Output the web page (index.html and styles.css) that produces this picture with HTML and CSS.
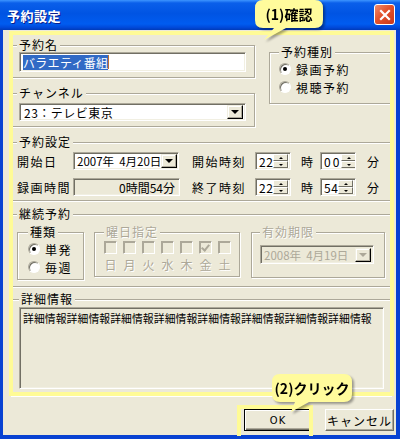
FILE: index.html
```html
<!DOCTYPE html>
<html lang="ja">
<head>
    <meta charset="UTF-8">
    <title>予約設定</title>
    <link rel="stylesheet" href="styles.css">
</head>
<body>
    <div class="window">
        <div class="titlebar">
            <span class="title">予約設定</span>
            <span class="close-btn">
                <svg width="12" height="12" viewBox="0 0 12 12"><path d="M2 2 L10 10 M10 2 L2 10" stroke="#fff" stroke-width="2.2" stroke-linecap="square"/></svg>
            </span>
        </div>

        <div class="client">
            <div class="top-row">
                <div class="left-col">
                    <fieldset class="group g-name">
                        <legend>予約名</legend>
                        <div class="field text-input"><span class="selected">バラエティ番組</span><span class="caret"></span></div>
                    </fieldset>
                    <fieldset class="group g-channel">
                        <legend>チャンネル</legend>
                        <div class="field combo"><span class="value">23：テレビ東京</span><span class="drop"><i class="arrow"></i></span></div>
                    </fieldset>
                </div>
                <fieldset class="group g-kind">
                    <legend>予約種別</legend>
                    <div class="radio"><span class="dot on"></span>録画予約</div>
                    <div class="radio"><span class="dot"></span>視聴予約</div>
                </fieldset>
            </div>

            <fieldset class="group g-time">
                <legend>予約設定</legend>
                <div class="time-grid">
                    <span class="lbl">開始日</span>
                    <div class="field combo date"><span class="value">2007年&nbsp;&nbsp;4月20日</span><span class="drop"><i class="arrow"></i></span></div>
                    <span></span>
                    <span class="lbl">開始時刻</span>
                    <div class="field spin"><span class="value">22</span><span class="spin-btns"><b><i class="up"></i></b><b><i class="down"></i></b></span></div>
                    <span class="unit">時</span>
                    <div class="field spin"><span class="value wide">00</span><span class="spin-btns"><b><i class="up"></i></b><b><i class="down"></i></b></span></div>
                    <span class="unit">分</span>

                    <span class="lbl">録画時間</span>
                    <div class="field readonly">0時間54分</div>
                    <span></span>
                    <span class="lbl">終了時刻</span>
                    <div class="field spin"><span class="value">22</span><span class="spin-btns"><b><i class="up"></i></b><b><i class="down"></i></b></span></div>
                    <span class="unit">時</span>
                    <div class="field spin"><span class="value">54</span><span class="spin-btns"><b><i class="up"></i></b><b><i class="down"></i></b></span></div>
                    <span class="unit">分</span>
                </div>
            </fieldset>

            <fieldset class="group g-repeat">
                <legend>継続予約</legend>
                <div class="repeat-row">
                    <fieldset class="group g-type">
                        <legend>種類</legend>
                        <div class="radio"><span class="dot on"></span>単発</div>
                        <div class="radio"><span class="dot"></span>毎週</div>
                    </fieldset>
                    <fieldset class="group g-days disabled">
                        <legend>曜日指定</legend>
                        <div class="days">
                            <div class="day"><span class="check"></span>日</div>
                            <div class="day"><span class="check"></span>月</div>
                            <div class="day"><span class="check"></span>火</div>
                            <div class="day"><span class="check"></span>水</div>
                            <div class="day"><span class="check"></span>木</div>
                            <div class="day"><span class="check checked"></span>金</div>
                            <div class="day"><span class="check"></span>土</div>
                        </div>
                    </fieldset>
                    <fieldset class="group g-limit disabled">
                        <legend>有効期限</legend>
                        <div class="field combo date off"><span class="value">2008年&nbsp;&nbsp;4月19日</span><span class="drop"><i class="arrow"></i></span></div>
                    </fieldset>
                </div>
            </fieldset>

            <fieldset class="group g-detail">
                <legend>詳細情報</legend>
                <div class="field memo">詳細情報詳細情報詳細情報詳細情報詳細情報詳細情報詳細情報詳細情報</div>
            </fieldset>

            <div class="buttons">
                <button class="btn default">OK</button>
                <button class="btn">キャンセル</button>
            </div>
        </div>

        <!-- annotation overlays -->
        <div class="mark mark-form"></div>
        <div class="mark mark-ok"></div>
        <svg class="callout callout-1" width="82" height="46" viewBox="0 0 82 46">
            <path d="M13 2 H65 Q73 2 73 10 V22 Q73 30 65 30 H36 L14 42 L24 30 H13 Q5 30 5 22 V10 Q5 2 13 2 Z" fill="#fffb9c"/>
            <text x="39" y="22" text-anchor="middle">(1)確認</text>
        </svg>
        <svg class="callout callout-2" width="92" height="46" viewBox="0 0 92 46">
            <path d="M13 2 H77 Q85 2 85 10 V22 Q85 30 77 30 H42 L24 40 L28 30 H13 Q5 30 5 22 V10 Q5 2 13 2 Z" fill="#fffb9c"/>
            <text x="45" y="22" text-anchor="middle">(2)クリック</text>
        </svg>
    </div>
</body>
</html>
```

FILE: styles.css
```css
body {
    margin: 0;
    font-family: "Noto Sans CJK JP", "Liberation Sans", sans-serif;
    font-size: 12px;
    color: #000;
}
.window {
    position: relative;
    width: 400px;
    height: 439px;
    display: flex;
    flex-direction: column;
    overflow: hidden;
    background: #0842d2;
}
.titlebar {
    height: 30px;
    display: flex;
    align-items: center;
    justify-content: space-between;
    padding: 0 5px 0 7px;
    background: linear-gradient(to bottom, #3d95ff 0%, #0a5fea 10%, #0054e3 45%, #005cf0 80%, #0048d8 92%, #003bb8 100%);
}
.title {
    color: #fff;
    font-size: 13px;
    font-weight: bold;
    letter-spacing: 0.5px;
    text-shadow: 1px 1px 0 #0a1e8c;
}
.close-btn {
    width: 19px;
    height: 19px;
    margin-top: -1px;
    border: 1px solid #fff;
    border-radius: 3px;
    background: linear-gradient(135deg, #f08c6c 0%, #e3522c 45%, #c8381a 100%);
    display: flex;
    align-items: center;
    justify-content: center;
}

.client {
    flex: 1;
    background: #ece9d8;
    margin: 0 4px 4px 3px;
    padding: 8px 5px 0 7px;
    display: flex;
    flex-direction: column;
}

/* group boxes */
.group {
    margin: 0;
    padding: 0 5px 5px 6px;
    min-width: 0;
    border: 1px solid #aca899;
    box-shadow: inset 1px 1px 0 #fff, 1px 1px 0 #fff;
}
.group legend {
    padding: 0 2px;
    line-height: 14px;
    letter-spacing: 1px;
    background: #ece9d8;
}
.disabled legend,
.disabled .day {
    color: #aca899;
    text-shadow: 1px 1px 0 #fff;
}

.top-row {
    display: flex;
    align-items: flex-start;
    gap: 14px;
}
.left-col {
    width: 245px;
    display: flex;
    flex-direction: column;
    gap: 8px;
}
.g-channel .field {
    margin-top: 3px;
}
.g-kind {
    flex: 1;
    margin-top: 7px;
    padding: 1px 0 7px 9px;
}

/* fields */
.field {
    box-sizing: border-box;
    border: 1px solid;
    border-color: #aca899 #fff #fff #aca899;
    box-shadow: inset 1px 1px 0 #716f64, inset -1px -1px 0 #f1efe2;
    background: #fff;
    display: flex;
    align-items: center;
    white-space: nowrap;
    overflow: hidden;
}
.text-input {
    height: 20px;
    margin-left: 2px;
    width: 227px;
    padding: 0 3px;
}
.selected {
    background: #316ac5;
    color: #fff;
    line-height: 15px;
    letter-spacing: 0.3px;
}
.caret {
    width: 1px;
    height: 14px;
    background: #c07030;
}
.combo {
    height: 18px;
    width: 227px;
    margin-left: 2px;
    padding: 2px;
    justify-content: space-between;
}
.combo .value {
    padding-left: 2px;
    letter-spacing: 0.5px;
}
.drop {
    flex: none;
    width: 16px;
    height: 14px;
    box-sizing: border-box;
    background: #ece9d8;
    border: 1px solid;
    border-color: #f1efe2 #000 #000 #f1efe2;
    box-shadow: inset -1px -1px 0 #aca899, inset 1px 1px 0 #fff;
    display: flex;
    align-items: center;
    justify-content: center;
}
.arrow {
    border-left: 4px solid transparent;
    border-right: 4px solid transparent;
    border-top: 4px solid #000;
}
.off {
    background: #ece9d8;
    color: #aca899;
}
.off .arrow {
    border-top-color: #aca899;
}

/* radios */
.radio {
    height: 18px;
    display: flex;
    align-items: center;
    letter-spacing: 1.5px;
}
.dot {
    width: 12px;
    height: 12px;
    box-sizing: border-box;
    margin-right: 5px;
    border-radius: 50%;
    border: 1px solid;
    border-color: #aca899 #fff #fff #aca899;
    background: #fff;
    box-shadow: inset 1px 1px 0 #716f64;
    display: flex;
    align-items: center;
    justify-content: center;
}
.dot.on::after {
    content: "";
    width: 4px;
    height: 4px;
    border-radius: 50%;
    background: #000;
}

/* reservation time */
.g-time {
    margin-top: 8px;
    padding-top: 3px;
    padding-bottom: 4px;
}
.time-grid {
    display: grid;
    grid-template-columns: 56px 105px 14px 63px 36px 29px 37px auto;
    grid-template-rows: 18px 18px;
    row-gap: 8px;
    align-items: center;
}
.lbl {
    letter-spacing: 1.5px;
}
.date {
    width: 106px;
    margin-left: 0;
    height: 18px;
}
.date .value {
    font-size: 11.5px;
    letter-spacing: 0;
    padding-left: 1px;
}
.spin {
    height: 18px;
    width: 36px;
    padding: 2px 2px 2px 3px;
    justify-content: space-between;
}
.spin .value {
    letter-spacing: 0.5px;
}
.spin .value.wide {
    letter-spacing: 2px;
}
.spin-btns {
    flex: none;
    display: flex;
    flex-direction: column;
    width: 15px;
}
.spin-btns b {
    height: 7px;
    box-sizing: border-box;
    background: #ece9d8;
    border: 1px solid;
    border-color: #fff #716f64 #716f64 #fff;
    display: flex;
    align-items: center;
    justify-content: center;
}
.up {
    border-left: 2px solid transparent;
    border-right: 2px solid transparent;
    border-bottom: 2px solid #000;
}
.down {
    border-left: 2px solid transparent;
    border-right: 2px solid transparent;
    border-top: 2px solid #000;
}
.unit {
    padding-left: 10px;
}
.readonly {
    height: 18px;
    width: 107px;
    background: #ece9d8;
    justify-content: flex-end;
    padding-right: 4px;
}

/* repeat */
.g-repeat {
    margin-top: 6px;
    padding-top: 4px;
    padding-bottom: 6px;
}
.repeat-row {
    display: flex;
    align-items: flex-start;
}
.g-type {
    width: 67px;
    box-sizing: border-box;
    padding: 1px 0 3px 10px;
}
.g-days {
    margin-left: 10px;
    width: 146px;
    box-sizing: border-box;
    padding: 2px 0 3px 9px;
}
.days {
    display: flex;
    gap: 6px;
}
.day {
    width: 13px;
    display: flex;
    flex-direction: column;
    align-items: center;
    gap: 3px;
    line-height: 16px;
}
.check {
    width: 13px;
    height: 13px;
    box-sizing: border-box;
    border: 1px solid;
    border-color: #aca899 #fff #fff #aca899;
    box-shadow: inset 1px 1px 0 #aca899;
    position: relative;
}
.check.checked::after {
    content: "";
    position: absolute;
    left: 3px;
    top: 1px;
    width: 3px;
    height: 6px;
    border: solid #aca899;
    border-width: 0 2px 2px 0;
    transform: rotate(40deg);
}
.g-limit {
    margin-left: 11px;
    flex: 1;
    padding: 6px 6px 13px 8px;
}
.g-limit .date {
    width: 114px;
    height: 19px;
}

/* detail */
.g-detail {
    margin-top: 5px;
    padding: 1px 6px 6px 8px;
}
.memo {
    height: 82px;
    background: #ece9d8;
    align-items: flex-start;
    padding: 3px 3px;
    font-size: 10.8px;
    line-height: 14px;
    letter-spacing: 0.1px;
}

/* buttons */
.buttons {
    display: flex;
    justify-content: flex-end;
    gap: 13px;
    margin-top: 13px;
    margin-right: -3px;
}
.btn {
    width: 69px;
    height: 22px;
    padding: 0;
    font-family: "Noto Sans CJK JP", "Liberation Sans", sans-serif;
    font-size: 12px;
    letter-spacing: 1px;
    background: #ece9d8;
    border: 1px solid;
    border-color: #fff #716f64 #716f64 #fff;
    box-shadow: inset -1px -1px 0 #aca899;
}
.btn.default {
    width: 68px;
    border-color: #000;
    box-shadow: inset 1px 1px 0 #fff, inset -1px -1px 0 #716f64, inset -2px -2px 0 #aca899;
    font-family: "Liberation Sans Narrow", "DejaVu Sans Condensed", sans-serif;
    font-size: 11px;
}

/* annotations */
.mark {
    position: absolute;
    box-sizing: border-box;
    border: 4px solid #fffb96;
    pointer-events: none;
}
.mark-form {
    left: 9px;
    top: 31px;
    width: 385px;
    height: 365px;
}
.mark-ok {
    left: 237px;
    top: 405px;
    width: 76px;
    height: 31px;
    border-bottom: none;
}
.callout {
    position: absolute;
    filter: drop-shadow(2px 2px 1px rgba(0, 0, 0, 0.35));
}
.callout text {
    font-family: "Noto Sans CJK JP", sans-serif;
    font-size: 14px;
    font-weight: bold;
    fill: #000;
}
.callout-1 {
    left: 250px;
    top: -2px;
}
.callout-2 {
    left: 267px;
    top: 372px;
}
```
